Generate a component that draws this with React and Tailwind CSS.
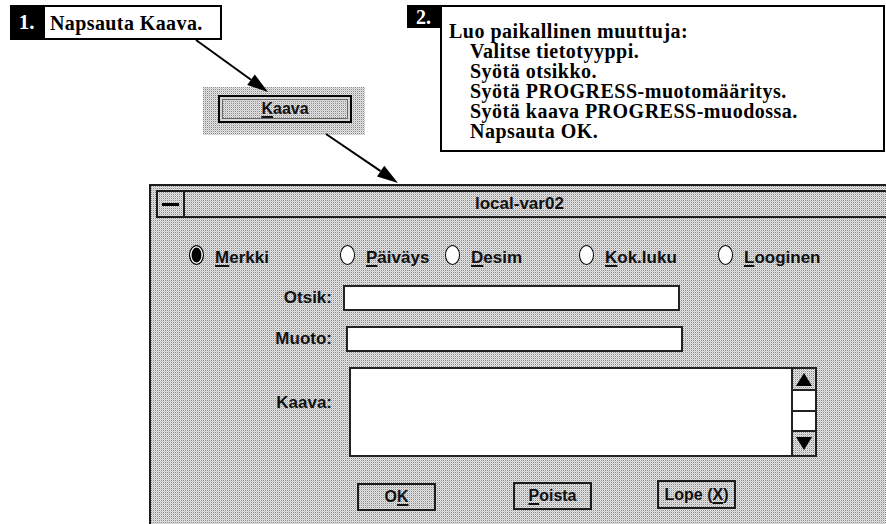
import React from "react";

const sans = "font-['Liberation_Sans',Arial,sans-serif]";
const serif = "font-['Liberation_Serif','Times_New_Roman',serif]";

// dotted dither texture of the old Motif-style surfaces; parent needs `relative isolate`
function Dither() {
  return (
    <svg className="pointer-events-none absolute inset-0 -z-10 h-full w-full" aria-hidden="true">
      <rect width="100%" height="100%" fill="url(#dither)" />
    </svg>
  );
}

function Arrow({ x1, y1, x2, y2 }) {
  const dx = x2 - x1;
  const dy = y2 - y1;
  const len = Math.hypot(dx, dy);
  const ux = dx / len;
  const uy = dy / len;
  const hl = 21;
  const hw = 6.5;
  const bx = x2 - ux * hl;
  const by = y2 - uy * hl;
  const pts = `${x2},${y2} ${bx - uy * hw},${by + ux * hw} ${bx + uy * hw},${by - ux * hw}`;
  return (
    <g>
      <line x1={x1} y1={y1} x2={bx} y2={by} stroke="#000" strokeWidth="2" />
      <polygon points={pts} fill="#000" />
    </g>
  );
}

function Radio({ label, checked, className }) {
  return (
    <div className={`flex items-center gap-[11px] ${className}`}>
      <div
        className={
          checked
            ? "h-[20px] w-[15px] shrink-0 rounded-[50%] border-[1.5px] border-black bg-black shadow-[inset_0_0_0_1.5px_#fff]"
            : "h-[20px] w-[15px] shrink-0 rounded-[50%] border-[1.5px] border-black bg-white"
        }
      />
      <span className="mt-[6px] text-[17px] font-bold leading-[20px] text-[#111]">
        <span className="underline decoration-2 underline-offset-[2px]">{label[0]}</span>
        {label.slice(1)}
      </span>
    </div>
  );
}

function Btn({ children, className }) {
  return (
    <div
      className={`relative isolate flex items-center justify-center border-2 border-[#1c1c1c] text-[16px] font-bold text-[#111] ${className}`}
    >
      <Dither />
      {children}
    </div>
  );
}

function Tri({ up }) {
  return (
    <svg width="16" height="13" viewBox="0 0 16 13">
      {up ? <polygon points="8,0 16,13 0,13" fill="#000" /> : <polygon points="0,0 16,0 8,13" fill="#000" />}
    </svg>
  );
}

export default function App() {
  return (
    <div className={`relative isolate h-[524px] w-[886px] overflow-hidden bg-white ${sans}`}>
      <svg width="0" height="0" className="absolute">
        <defs>
          <pattern id="dither" width="2" height="2" patternUnits="userSpaceOnUse">
            <rect width="2" height="2" fill="#e4e4e4" />
            <rect width="1" height="1" fill="#8a8a8a" shapeRendering="crispEdges" />
            <rect x="1" y="1" width="1" height="1" fill="#c8c8c8" shapeRendering="crispEdges" />
          </pattern>
        </defs>
      </svg>

      {/* step 1 callout */}
      <div className={`absolute left-[10px] top-[5px] flex h-[35px] ${serif}`}>
        <div className="flex w-[33px] items-center justify-center bg-black text-[21px] font-bold text-white">
          1.
        </div>
        <div className="flex w-[179px] items-center border-2 border-black pl-[5px] text-[20px] font-bold tracking-[0.4px] text-black">
          Napsauta Kaava.
        </div>
      </div>

      {/* Kaava button cut out of the main window */}
      <div className="absolute left-[203px] top-[87px] isolate h-[48px] w-[162px] pl-[15px] pt-[8px]">
        <Dither />
        <div className="flex h-[28px] w-[134px] items-center justify-center border-2 border-black text-[16px] font-bold text-[#111] shadow-[inset_0_0_0_2px_#d4d4d4,inset_0_0_0_3px_#6a6a6a]">
          <span className="underline decoration-2 underline-offset-[2px]">K</span>aava
        </div>
      </div>

      {/* step 2 callout */}
      <div className={`absolute left-[407px] top-[5px] flex ${serif}`}>
        <div className="flex h-[23px] w-[33px] items-center justify-center bg-black text-[20px] font-bold text-white">
          2.
        </div>
        <div className="h-[147px] w-[445px] border-2 border-black pl-[7px] pt-[14px] text-[20px] font-bold leading-[20px] tracking-[0.5px] text-black">
          <p>Luo paikallinen muuttuja:</p>
          <div className="pl-[21px]">
            <p>Valitse tietotyyppi.</p>
            <p>Syötä otsikko.</p>
            <p>Syötä PROGRESS-muotomääritys.</p>
            <p>Syötä kaava PROGRESS-muodossa.</p>
            <p>Napsauta OK.</p>
          </div>
        </div>
      </div>

      {/* dialog */}
      <div className="pl-[149px] pt-[184px]">
        <div className="relative isolate h-[340px] w-[737px] border-l-2 border-t-2 border-[#1c1c1c]">
          <Dither />
          <div className="ml-[5px] mt-[4px] flex h-[28px] border-y-2 border-l-2 border-[#1c1c1c]">
            <div className="flex w-[27px] shrink-0 items-center justify-center border-r-2 border-[#1c1c1c]">
              <div className="h-[3px] w-[17px] bg-black" />
            </div>
            <div className="flex items-center pl-[290px] text-[17px] font-bold text-[#111]">local-var02</div>
          </div>

          <div className="ml-[38px] mt-[27px] flex h-[20px] items-center">
            <Radio label="Merkki" checked className="w-[151px]" />
            <Radio label="Päiväys" className="w-[105px]" />
            <Radio label="Desim" className="w-[134px]" />
            <Radio label="Kok.luku" className="w-[139px]" />
            <Radio label="Looginen" />
          </div>

          <div className="mt-[20px] flex items-center">
            <div className="w-[181px] text-right text-[17px] font-bold text-[#111]">Otsik:</div>
            <div className="ml-[11px] h-[26px] w-[337px] border-2 border-[#222] bg-white" />
          </div>
          <div className="mt-[15px] flex items-center">
            <div className="w-[181px] text-right text-[17px] font-bold text-[#111]">Muoto:</div>
            <div className="ml-[14px] h-[26px] w-[337px] border-2 border-[#222] bg-white" />
          </div>
          <div className="mt-[15px] flex items-start">
            <div className="mt-[26px] w-[181px] text-right text-[17px] font-bold leading-[20px] text-[#111]">Kaava:</div>
            <div className="ml-[17px] flex h-[90px] w-[468px] border-2 border-[#222]">
              <div className="flex-1 bg-white" />
              <div className="flex w-[24px] flex-col border-l-2 border-[#222]">
                <div className="relative isolate flex h-[22px] items-center justify-center border-b-2 border-[#222]">
                  <Dither />
                  <Tri up />
                </div>
                <div className="h-[21px] border-b-2 border-[#222] bg-white" />
                <div className="h-[20px] border-b-2 border-[#222] bg-white" />
                <div className="relative isolate flex flex-1 items-center justify-center">
                  <Dither />
                  <Tri />
                </div>
              </div>
            </div>
          </div>

          <div className="mt-[23px] flex items-start">
            <Btn className="ml-[206px] mt-[3px] h-[28px] w-[79px]">
              <span>
                O<span className="underline decoration-2 underline-offset-[2px]">K</span>
              </span>
            </Btn>
            <Btn className="ml-[77px] mt-[2px] h-[28px] w-[79px]">
              <span>
                <span className="underline decoration-2 underline-offset-[2px]">P</span>oista
              </span>
            </Btn>
            <Btn className="ml-[65px] h-[29px] w-[79px]">
              <span>
                Lope (<span className="underline decoration-2 underline-offset-[2px]">X</span>)
              </span>
            </Btn>
          </div>
        </div>
      </div>

      {/* pointer arrows */}
      <svg className="pointer-events-none absolute left-0 top-0" width="886" height="524">
        <Arrow x1={196} y1={40} x2={268} y2={92} />
        <Arrow x1={326} y1={134} x2={398} y2={183} />
      </svg>
    </div>
  );
}
